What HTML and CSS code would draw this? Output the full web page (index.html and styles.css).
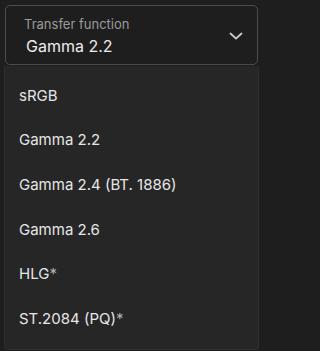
FILE: index.html
```html
<!DOCTYPE html>
<html>
<head>
<meta charset="utf-8">
<link rel="stylesheet" href="styles.css">
</head>
<body>
<div class="select">
  <div class="field">
    <div class="field-text">
      <div class="label">Transfer function</div>
      <div class="value">Gamma 2.2</div>
    </div>
    <svg class="chevron" width="14" height="8" viewBox="0 0 14 8"><path d="M1.5 1.5 L7 6.5 L12.5 1.5" fill="none" stroke="#c8c8c8" stroke-width="1.8" stroke-linecap="round" stroke-linejoin="round"/></svg>
  </div>
  <ul class="menu">
    <li class="item">sRGB</li>
    <li class="item">Gamma 2.2</li>
    <li class="item">Gamma 2.4 (BT. 1886)</li>
    <li class="item">Gamma 2.6</li>
    <li class="item">HLG<span class="star">*</span></li>
    <li class="item">ST.2084 (PQ)<span class="star">*</span></li>
  </ul>
</div>
</body>
</html>
```

FILE: styles.css
```css
html, body {
  margin: 0;
  padding: 0;
  background: #1e1e1e;
  font-family: Inter, "Noto Sans", sans-serif;
  width: 263px;
  height: 351px;
  overflow: hidden;
}
.select {
  padding: 5px 4px 0 4px;
}
.field {
  margin: 0 1px;
  height: 60px;
  border: 1px solid #4c4c4c;
  border-radius: 5px;
  display: flex;
  align-items: center;
  justify-content: space-between;
  padding: 0 14px 0 18px;
  box-sizing: border-box;
}
.field-text {
  display: flex;
  flex-direction: column;
  gap: 4px;
  padding-top: 1px;
}
.label {
  font-size: 13px;
  color: #9b9b9b;
  line-height: 16px;
}
.value {
  font-size: 16px;
  color: #ececec;
  line-height: 20px;
  padding-left: 2px;
}
.chevron {
  display: block;
  margin-top: 1px;
}
.menu {
  list-style: none;
  margin: 1px 0 0 0;
  padding: 7px 0 8px 0;
  background: #262626;
  border: 1px solid #2e2e2e;
  border-top: none;
  border-radius: 0 0 4px 4px;
  height: 284px;
  box-sizing: border-box;
}
.item {
  height: 44.6px;
  display: flex;
  align-items: center;
  padding-left: 14px;
  font-size: 15px;
  color: #e6e6e6;
}
.star {
  color: #b4b4b4;
}
```
